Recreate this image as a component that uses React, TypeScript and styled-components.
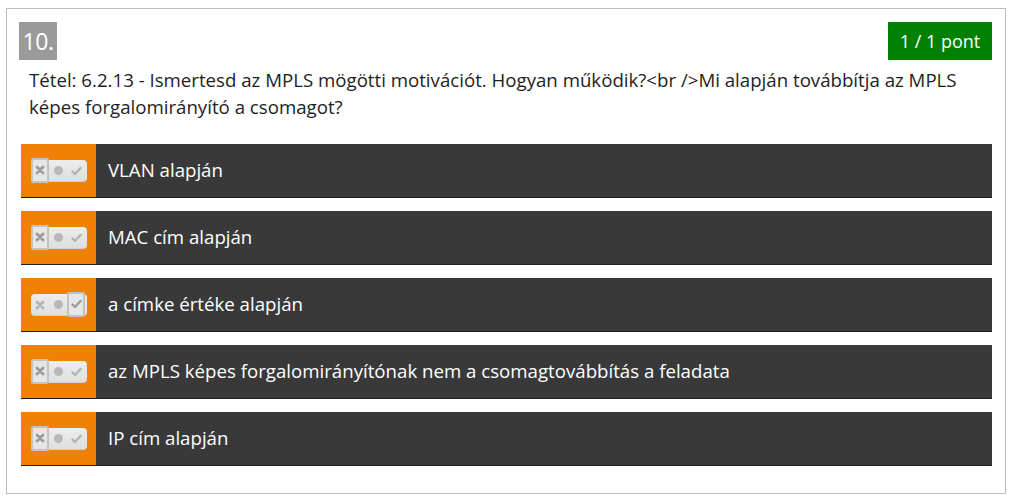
import React from "react";
import styled, { createGlobalStyle } from "styled-components";

const Global = createGlobalStyle`
  html, body { margin: 0; padding: 0; background: #fff; }
  body { font-family: "Open Sans", "DejaVu Sans", sans-serif; }
`;

const Card = styled.div`
  margin: 8px 0 0 6px;
  width: 1000px;
  height: 486px;
  box-sizing: border-box;
  border: 1px solid #bcbcbc;
  padding: 13px 13px 0 12px;
`;

const Header = styled.div`
  display: flex;
  justify-content: space-between;
  align-items: flex-start;
`;

const Number = styled.div`
  width: 38px;
  height: 38px;
  background: #9b9b9b;
  color: #fff;
  font-size: 23px;
  line-height: 38px;
  text-align: center;
  letter-spacing: -0.5px;
`;

const Score = styled.div`
  width: 104px;
  height: 38px;
  background: #008000;
  color: #fff;
  font-size: 18px;
  line-height: 38px;
  text-align: center;
`;

const Question = styled.div`
  margin: 6px 0 0 10px;
  font-size: 18.67px;
  line-height: 27px;
  color: #1e1e1e;
  width: 960px;
`;

const List = styled.div`
  margin: 24px 0 0 2px;
  display: flex;
  flex-direction: column;
  gap: 13px;
  width: 971px;
`;

const Row = styled.div`
  display: flex;
  height: 54px;
  background: #393939;
  border-bottom: 1px solid #1e1e1e;
  box-sizing: border-box;
`;

const Side = styled.div`
  width: 75px;
  background: #ef8104;
  display: flex;
  align-items: center;
  padding-left: 10px;
  box-sizing: border-box;
`;

const Pill = styled.div`
  width: 56px;
  height: 22px;
  border-radius: 4px;
  background: linear-gradient(#ededed, #dedede);
  display: flex;
  align-items: center;
  box-shadow: inset 0 -1px 0 rgba(0, 0, 0, 0.06);
`;

const Seg = styled.div<{ $on?: boolean }>`
  width: 18px;
  height: ${(p) => (p.$on ? "25px" : "22px")};
  box-sizing: border-box;
  display: flex;
  align-items: center;
  justify-content: center;
  color: ${(p) => (p.$on ? "#9a9a9a" : "#b3b3b3")};
  ${(p) =>
    p.$on
      ? `border: 2px solid #c2c2c2; background: #e6e6e6; border-radius: 2px; margin-top: -1px;`
      : ``}
`;

const Dot = styled.span`
  width: 9px;
  height: 9px;
  border-radius: 50%;
  background: #b8b8b8;
`;

const Label = styled.div`
  flex: 1;
  color: #fff;
  font-size: 18.67px;
  padding-left: 12px;
  display: flex;
  align-items: center;
  padding-bottom: 2px;
`;

const Cross = () => (
  <svg width="10" height="10" viewBox="0 0 10 10">
    <path d="M2 2 L8 8 M8 2 L2 8" stroke="currentColor" strokeWidth="2.8" strokeLinecap="round" />
  </svg>
);

const Check = () => (
  <svg width="11" height="10" viewBox="0 0 11 10">
    <path d="M1.5 5.5 L4 8 L9.5 2" stroke="currentColor" strokeWidth="2.4" fill="none" strokeLinecap="round" strokeLinejoin="round" />
  </svg>
);

const answers: { text: string; sel: 0 | 2 }[] = [
  { text: "VLAN alapján", sel: 0 },
  { text: "MAC cím alapján", sel: 0 },
  { text: "a címke értéke alapján", sel: 2 },
  { text: "az MPLS képes forgalomirányítónak nem a csomagtovábbítás a feladata", sel: 0 },
  { text: "IP cím alapján", sel: 0 },
];

export default function App() {
  return (
    <>
      <Global />
      <Card>
        <Header>
          <Number>10.</Number>
          <Score>1 / 1 pont</Score>
        </Header>
        <Question>
          Tétel: 6.2.13 - Ismertesd az MPLS mögötti motivációt. Hogyan működik?&lt;br /&gt;Mi alapján továbbítja az MPLS képes forgalomirányító a csomagot?
        </Question>
        <List>
          {answers.map((a) => (
            <Row key={a.text}>
              <Side>
                <Pill>
                  <Seg $on={a.sel === 0}>
                    <Cross />
                  </Seg>
                  <Seg>
                    <Dot />
                  </Seg>
                  <Seg $on={a.sel === 2}>
                    <Check />
                  </Seg>
                </Pill>
              </Side>
              <Label>{a.text}</Label>
            </Row>
          ))}
        </List>
      </Card>
    </>
  );
}
